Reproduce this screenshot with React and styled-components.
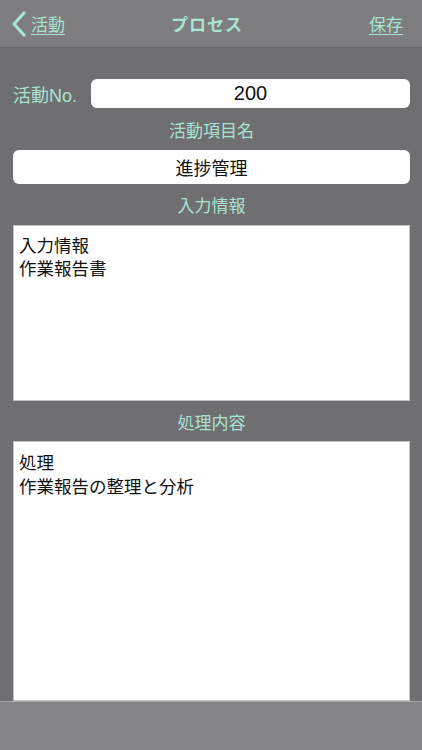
import React from 'react';
import styled, { createGlobalStyle } from 'styled-components';

const GlobalStyle = createGlobalStyle`
    html, body {
        margin: 0;
        padding: 0;
        background: #6f6e70;
    }
    body {
        font-family: "Liberation Sans", "Noto Sans CJK JP", sans-serif;
    }
`;

const Screen = styled.div`
    width: 422px;
    height: 750px;
    display: flex;
    flex-direction: column;
    background: #6f6e70;
    overflow: hidden;
`;

const NavBar = styled.div`
    height: 47px;
    flex-shrink: 0;
    display: grid;
    grid-template-columns: 1fr auto 1fr;
    align-items: center;
    padding: 0 19px 0 11px;
    background: #7e7d7f;
    border-bottom: 1px solid #676668;
    color: #a8e4d3;
    font-size: 17px;
`;

const BackLink = styled.a`
    display: flex;
    align-items: center;
    gap: 5px;
    color: inherit;
    text-decoration: underline;
    text-underline-offset: 3px;
    text-decoration-thickness: 1px;
    svg{
        flex-shrink: 0;
    }
`;

const NavTitle = styled.div`
    font-weight: bold;
    letter-spacing: 1px;
`;

const SaveLink = styled.a`
    justify-self: end;
    color: inherit;
    text-decoration: underline;
    text-underline-offset: 3px;
    text-decoration-thickness: 1px;
`;

const Body = styled.div`
    flex: 1;
    display: flex;
    flex-direction: column;
    padding: 31px 12px 0 13px;
`;

const Row = styled.div`
    display: flex;
    align-items: center;
    gap: 14px;
`;

const InlineLabel = styled.span`
    color: #a8e4d3;
    font-size: 18px;
    white-space: nowrap;
`;

const Field = styled.div`
    flex: ${p => p.$grow ? 1 : 'none'};
    height: ${p => p.$h}px;
    display: flex;
    align-items: center;
    justify-content: center;
    background: #fff;
    border-radius: 6px;
    color: #111;
    font-size: ${p => p.$size || 18}px;
`;

const Caption = styled.div`
    height: ${p => p.$h}px;
    display: flex;
    align-items: center;
    justify-content: center;
    color: #a8e4d3;
    font-size: 17px;
`;

const TextArea = styled.div`
    height: ${p => p.$h ? p.$h + 'px' : 'auto'};
    flex: ${p => p.$grow ? 1 : 'none'};
    box-sizing: border-box;
    background: #fff;
    border: 1px solid #c4c4c4;
    padding: ${p => p.$pt}px 5px 0 5px;
    color: #111;
    font-size: 17.5px;
    line-height: ${p => p.$lh}px;
    white-space: pre-line;
`;

const BottomBar = styled.div`
    height: 48px;
    flex-shrink: 0;
    background: #858486;
    border-top: 1px solid #a3a3a3;
`;

const Chevron = () => (
    <svg width="15" height="26" viewBox="0 0 15 26">
        <path d="M13 2 L3 13 L13 24" fill="none" stroke="#a8e4d3" strokeWidth="3.2" strokeLinecap="round" strokeLinejoin="round" />
    </svg>
);

const App = () => {
    return (
        <Screen>
            <GlobalStyle />
            <NavBar>
                <BackLink><Chevron />活動</BackLink>
                <NavTitle>プロセス</NavTitle>
                <SaveLink>保存</SaveLink>
            </NavBar>

            <Body>
                <Row>
                    <InlineLabel>活動No.</InlineLabel>
                    <Field $grow $h={29} $size={20}>200</Field>
                </Row>
                <Caption $h={42}>活動項目名</Caption>
                <Field $h={34}>進捗管理</Field>
                <Caption $h={41}>入力情報</Caption>
                <TextArea $h={176} $pt={9} $lh={23}>{"入力情報\n作業報告書"}</TextArea>
                <Caption $h={40}>処理内容</Caption>
                <TextArea $grow $pt={9} $lh={24}>{"処理\n作業報告の整理と分析"}</TextArea>
            </Body>

            <BottomBar />
        </Screen>
    );
}

export default App;
